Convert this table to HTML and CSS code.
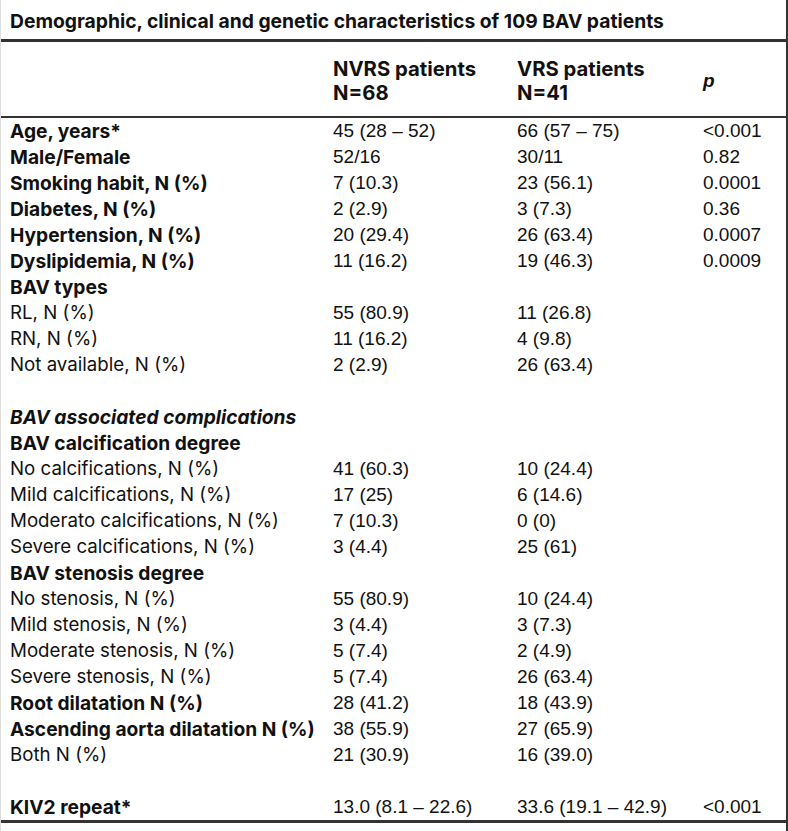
FILE: index.html
```html
<!DOCTYPE html>
<html>
<head>
<meta charset="utf-8">
<link rel="stylesheet" href="styles.css">
</head>
<body>
<div class="frame">
  <div class="title">Demographic, clinical and genetic characteristics of 109 BAV patients</div>
  <table class="tbl">
    <colgroup>
      <col class="c-label"><col class="c-a"><col class="c-b"><col class="c-p">
    </colgroup>
    <thead>
      <tr>
        <th></th>
        <th class="hd">NVRS patients<br>N=68</th>
        <th class="hd">VRS patients<br>N=41</th>
        <th class="hd"><i>p</i></th>
      </tr>
    </thead>
    <tbody>
      <tr><td class="lb b">Age, years*</td><td>45 (28 – 52)</td><td>66 (57 – 75)</td><td>&lt;0.001</td></tr>
      <tr><td class="lb b">Male/Female</td><td>52/16</td><td>30/11</td><td>0.82</td></tr>
      <tr><td class="lb b">Smoking habit, N (%)</td><td>7 (10.3)</td><td>23 (56.1)</td><td>0.0001</td></tr>
      <tr><td class="lb b">Diabetes, N (%)</td><td>2 (2.9)</td><td>3 (7.3)</td><td>0.36</td></tr>
      <tr><td class="lb b">Hypertension, N (%)</td><td>20 (29.4)</td><td>26 (63.4)</td><td>0.0007</td></tr>
      <tr><td class="lb b">Dyslipidemia, N (%)</td><td>11 (16.2)</td><td>19 (46.3)</td><td>0.0009</td></tr>
      <tr><td class="lb b">BAV types</td><td></td><td></td><td></td></tr>
      <tr><td class="lb">RL, N (%)</td><td>55 (80.9)</td><td>11 (26.8)</td><td></td></tr>
      <tr><td class="lb">RN, N (%)</td><td>11 (16.2)</td><td>4 (9.8)</td><td></td></tr>
      <tr><td class="lb">Not available, N (%)</td><td>2 (2.9)</td><td>26 (63.4)</td><td></td></tr>
      <tr><td class="lb">&nbsp;</td><td></td><td></td><td></td></tr>
      <tr><td class="lb b"><i>BAV associated complications</i></td><td></td><td></td><td></td></tr>
      <tr><td class="lb b">BAV calcification degree</td><td></td><td></td><td></td></tr>
      <tr><td class="lb">No calcifications, N (%)</td><td>41 (60.3)</td><td>10 (24.4)</td><td></td></tr>
      <tr><td class="lb">Mild calcifications, N (%)</td><td>17 (25)</td><td>6 (14.6)</td><td></td></tr>
      <tr><td class="lb">Moderato calcifications, N (%)</td><td>7 (10.3)</td><td>0 (0)</td><td></td></tr>
      <tr><td class="lb">Severe calcifications, N (%)</td><td>3 (4.4)</td><td>25 (61)</td><td></td></tr>
      <tr><td class="lb b">BAV stenosis degree</td><td></td><td></td><td></td></tr>
      <tr><td class="lb">No stenosis, N (%)</td><td>55 (80.9)</td><td>10 (24.4)</td><td></td></tr>
      <tr><td class="lb">Mild stenosis, N (%)</td><td>3 (4.4)</td><td>3 (7.3)</td><td></td></tr>
      <tr><td class="lb">Moderate stenosis, N (%)</td><td>5 (7.4)</td><td>2 (4.9)</td><td></td></tr>
      <tr><td class="lb">Severe stenosis, N (%)</td><td>5 (7.4)</td><td>26 (63.4)</td><td></td></tr>
      <tr><td class="lb b">Root dilatation N (%)</td><td>28 (41.2)</td><td>18 (43.9)</td><td></td></tr>
      <tr><td class="lb b">Ascending aorta dilatation N (%)</td><td>38 (55.9)</td><td>27 (65.9)</td><td></td></tr>
      <tr><td class="lb">Both N (%)</td><td>21 (30.9)</td><td>16 (39.0)</td><td></td></tr>
      <tr><td class="lb">&nbsp;</td><td></td><td></td><td></td></tr>
      <tr><td class="lb b">KIV2 repeat*</td><td>13.0 (8.1 – 22.6)</td><td>33.6 (19.1 – 42.9)</td><td>&lt;0.001</td></tr>
    </tbody>
  </table>
</div>
</body>
</html>
```

FILE: styles.css
```css
html, body {
  margin: 0;
  padding: 0;
  background: #ffffff;
}

.frame {
  width: 788px;
  height: 831px;
  border-left: 1px solid #dddddd;
  border-right: 2px solid #333333;
  box-sizing: border-box;
  color: #111111;
  font-family: "Liberation Sans", Arial, sans-serif;
}

.title {
  height: 42px;
  box-sizing: border-box;
  padding: 10px 0 0 9px;
  font-family: Inter, "Open Sans", sans-serif;
  font-weight: 700;
  font-size: 19.3px;
  line-height: 22px;
  border-bottom: 3px solid #333333;
  white-space: nowrap;
}

.tbl {
  width: 100%;
  border-collapse: collapse;
  table-layout: fixed;
}

.c-label { width: 332px; }
.c-a { width: 184px; }
.c-b { width: 186px; }
.c-p { width: auto; }

.tbl th {
  height: 71px;
  padding: 0;
  text-align: left;
  vertical-align: middle;
  border-bottom: 2px solid #333333;
}

.hd {
  font-family: Inter, "Open Sans", sans-serif;
  font-weight: 700;
  font-size: 20.3px;
  line-height: 24px;
  padding-top: 3px !important;
}

.hd i {
  font-family: "Liberation Sans", Arial, sans-serif;
  font-size: 19px;
}

.tbl td {
  height: 26px;
  padding: 0;
  font-size: 19px;
  line-height: 26px;
  vertical-align: middle;
  white-space: nowrap;
}

.tbl tbody tr:last-child td {
  border-bottom: 3px solid #333333;
  height: 26px;
}

.tbl td.lb {
  padding-left: 9px;
  font-family: Inter, "Open Sans", sans-serif;
  font-size: 18.7px;
}

.tbl td.b {
  font-size: 19.2px;
  font-weight: 700;
}
```
